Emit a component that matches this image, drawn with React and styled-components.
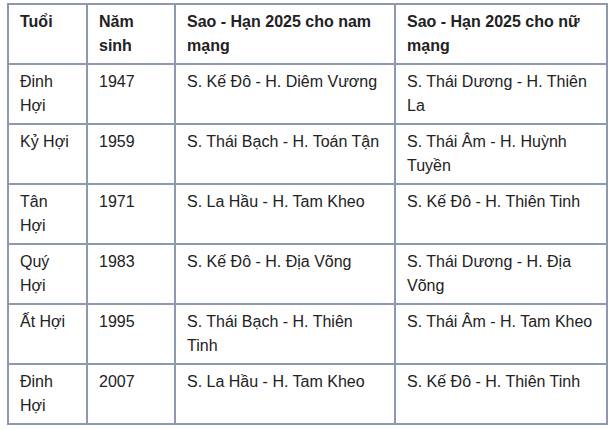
import React from 'react';
import styled, { createGlobalStyle } from 'styled-components';

const GlobalStyle = createGlobalStyle`
  html, body {
    margin: 0;
    padding: 0;
    background: #ffffff;
  }
`;

const Page = styled.div`
  padding: 3px 0 0 7px;
  font-family: "Liberation Sans", Arial, sans-serif;
  font-size: 16px;
  line-height: 24px;
  color: #222222;
`;

const Table = styled.table`
  width: 599px;
  table-layout: fixed;
  border-collapse: collapse;
  border: 2px solid #8d99ae;
`;

const Col = styled.col`
  width: ${p => p.$w}px;
`;

const HeadCell = styled.th`
  border: 2px solid #8d99ae;
  padding: 5px 11px;
  text-align: left;
  vertical-align: top;
  font-weight: 700;
`;

const Cell = styled.td`
  border: 2px solid #8d99ae;
  padding: 5px 11px;
  text-align: left;
  vertical-align: top;
  height: 48px;
`;

const widths = [79, 88, 220, 212];

const rows = [
  ['Đinh Hợi', '1947', 'S. Kế Đô - H. Diêm Vương', 'S. Thái Dương - H. Thiên La'],
  ['Kỷ Hợi', '1959', 'S. Thái Bạch - H. Toán Tận', 'S. Thái Âm - H. Huỳnh Tuyền'],
  ['Tân Hợi', '1971', 'S. La Hầu - H. Tam Kheo', 'S. Kế Đô - H. Thiên Tinh'],
  ['Quý Hợi', '1983', 'S. Kế Đô - H. Địa Võng', 'S. Thái Dương - H. Địa Võng'],
  ['Ất Hợi', '1995', 'S. Thái Bạch - H. Thiên Tinh', 'S. Thái Âm - H. Tam Kheo'],
  ['Đinh Hợi', '2007', 'S. La Hầu - H. Tam Kheo', 'S. Kế Đô - H. Thiên Tinh'],
];

const App = () => (
  <>
    <GlobalStyle />
    <Page>
      <Table>
        <colgroup>
          {widths.map((w, i) => (
            <Col key={i} $w={w} />
          ))}
        </colgroup>
        <thead>
          <tr>
            <HeadCell>Tuổi</HeadCell>
            <HeadCell>Năm sinh</HeadCell>
            <HeadCell>Sao - Hạn 2025 cho nam mạng</HeadCell>
            <HeadCell>Sao - Hạn 2025 cho nữ mạng</HeadCell>
          </tr>
        </thead>
        <tbody>
          {rows.map((r, i) => (
            <tr key={i}>
              {r.map((c, j) => (
                <Cell key={j}>{c}</Cell>
              ))}
            </tr>
          ))}
        </tbody>
      </Table>
    </Page>
  </>
);

export default App;
